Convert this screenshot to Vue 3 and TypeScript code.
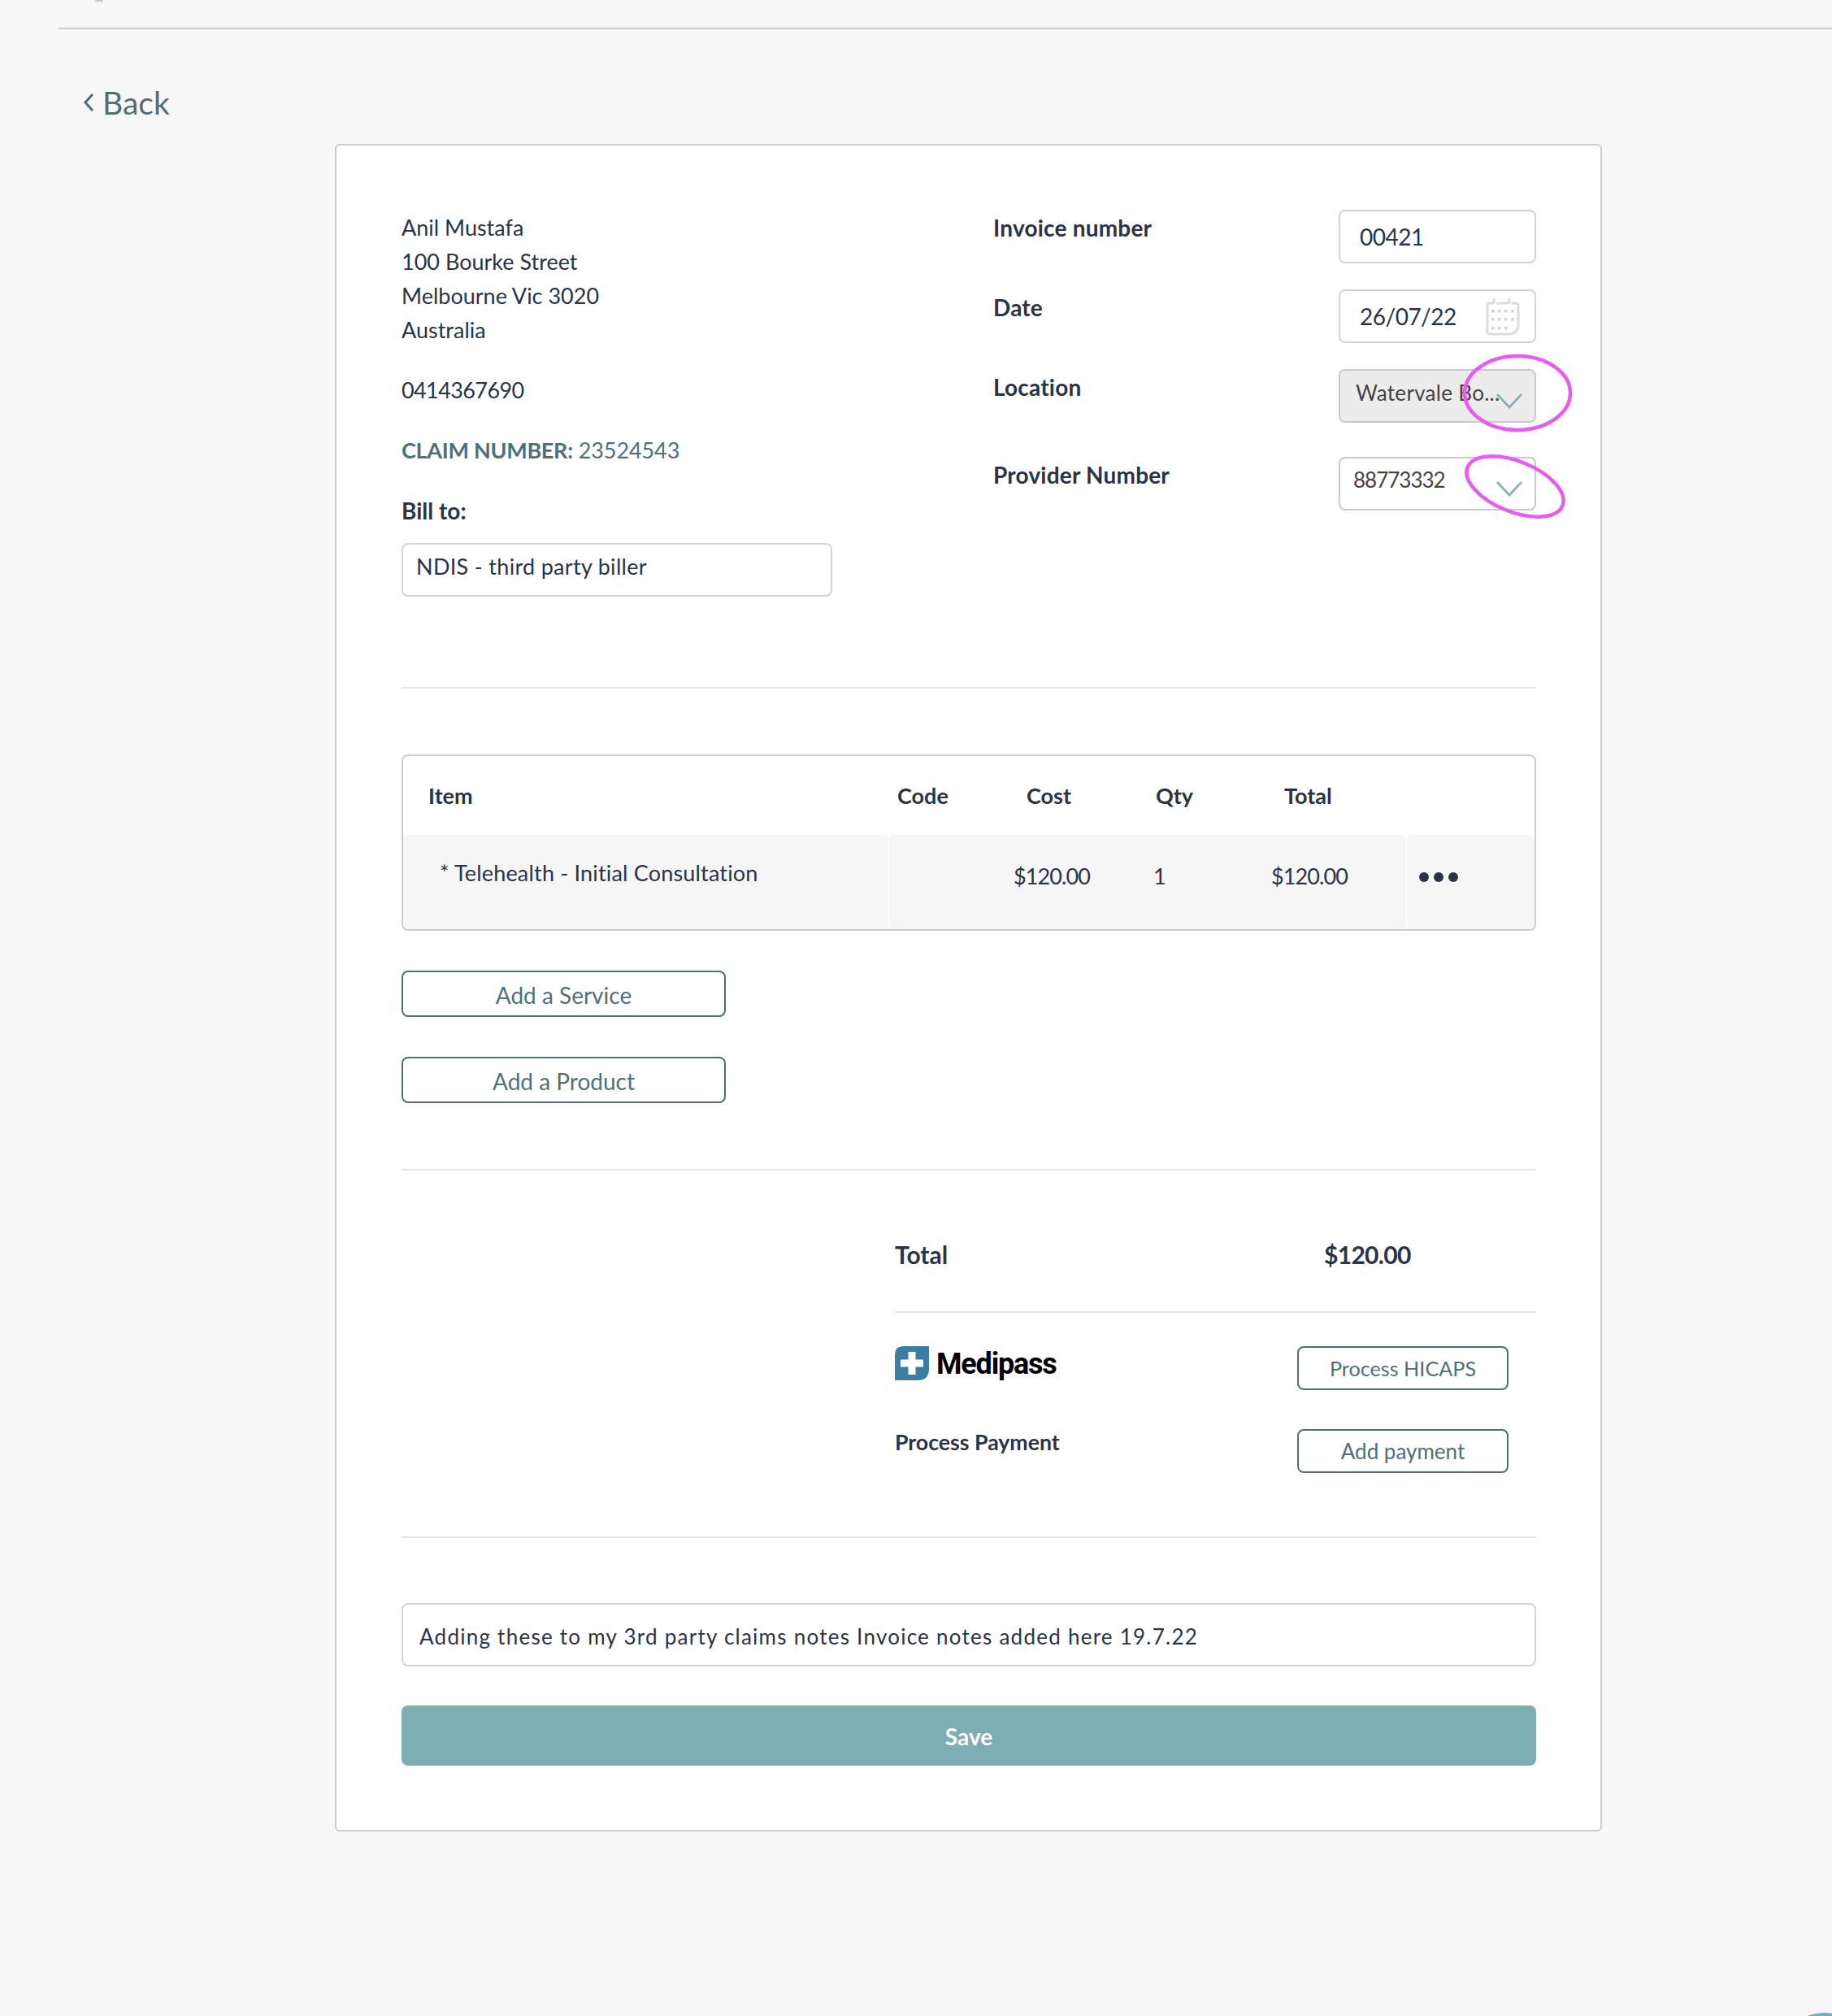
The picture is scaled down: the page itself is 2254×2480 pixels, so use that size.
<script setup lang="ts">
const address: string[] = ['Anil Mustafa', '100 Bourke Street', 'Melbourne Vic 3020', 'Australia']
const calendarDots: { x: number; y: number }[] = []
const rowsY: number[] = [15, 25, 36]
rowsY.forEach((y, r) => {
  for (let c = 0; c < (r === 2 ? 3 : 4); c++) {
    calendarDots.push({ x: 8 + c * 8, y })
  }
})
</script>

<template>
  <div class="page">
    <div class="top-mark"></div>
    <div class="top-line"></div>
    <a class="back">
      <svg class="back-icon" viewBox="0 0 14 24" width="14" height="24">
        <path d="M12 2 L3 12 L12 22" fill="none" stroke="#4f7077" stroke-width="3" />
      </svg>
      <span>Back</span>
    </a>

    <main class="card">
      <section class="head">
        <div class="left">
          <p class="para"><span v-for="line in address" :key="line" class="line">{{ line }}</span></p>
          <p class="para num">0414367690</p>
          <p class="para"><b class="claim">CLAIM NUMBER:</b> <span class="claim-no">23524543</span></p>
          <p class="para bold">Bill to:</p>
          <div class="field bill">NDIS - third party biller</div>
        </div>
        <div class="right">
          <div class="row gap-a">
            <span class="label">Invoice number</span>
            <div class="field small big-text">00421</div>
          </div>
          <div class="row gap-a">
            <span class="label">Date</span>
            <div class="field small big-text">
              26/07/22
              <svg class="cal" viewBox="0 0 44 48" width="44" height="48">
                <path d="M11 1 V5 Q11 7 9 7 H6 Q3 7 3 10 V41 Q3 45 7 45 H28 Q40 45 41 34 V10 Q41 7 38 7 H33 M30 1 V5 Q30 7 28 7 H14" fill="none" stroke="#dcdcdc" stroke-width="3" />
                <rect v-for="(d, i) in calendarDots" :key="i" :x="d.x" :y="d.y" width="3.5" height="3.5" fill="#d2d2d2" />
              </svg>
            </div>
          </div>
          <div class="row gap-b">
            <span class="label">Location</span>
            <div class="field small disabled">
              <span class="loc">Watervale Bo...</span>
              <svg class="chev loc-chev" viewBox="0 0 32 19" width="32" height="19">
                <path d="M1 1 L16 17 L31 1" fill="none" stroke="#82b4b9" stroke-width="2.8" />
              </svg>
            </div>
          </div>
          <div class="row">
            <span class="label">Provider Number</span>
            <div class="field small prov">
              <span>88773332</span>
              <svg class="chev prov-chev" viewBox="0 0 32 19" width="32" height="19">
                <path d="M1 1 L16 17 L31 1" fill="none" stroke="#82b4b9" stroke-width="2.8" />
              </svg>
            </div>
          </div>
        </div>
      </section>

      <hr class="rule first" />

      <section class="table">
        <div class="thead">
          <span>Item</span><span>Code</span><span>Cost</span><span>Qty</span><span>Total</span>
        </div>
        <div class="tbody">
          <div class="cell item">* Telehealth - Initial Consultation</div>
          <div class="cell mid"><span>$120.00</span><span class="qty">1</span><span>$120.00</span></div>
          <div class="cell actions"><i></i><i></i><i></i></div>
        </div>
      </section>

      <button class="btn wide">Add a Service</button>
      <button class="btn wide second">Add a Product</button>

      <hr class="rule second-rule" />

      <section class="summary">
        <div class="total"><span>Total</span><span class="total-value">$120.00</span></div>
        <hr class="rule" />
        <div class="pay medi">
          <div class="logo">
            <svg viewBox="0 0 42 42" width="42" height="42">
              <path d="M11 0 H42 V28 Q42 42 28 42 H0 V11 Q0 0 11 0 Z" fill="#3a7ea1" />
              <path d="M16.5 7 H25.5 V16.5 H35 V25.5 H25.5 V35 H16.5 V25.5 H7 V16.5 H16.5 Z" fill="#fff" />
            </svg>
            <span>Medipass</span>
          </div>
          <button class="btn slim hicaps">Process HICAPS</button>
        </div>
        <div class="pay proc">
          <span class="proc-label">Process Payment</span>
          <button class="btn slim">Add payment</button>
        </div>
      </section>

      <hr class="rule third-rule" />

      <div class="notes">Adding these to my 3rd party claims notes Invoice notes added here 19.7.22</div>
      <button class="save">Save</button>
    </main>

    <svg class="marks" viewBox="0 0 2254 2480" width="2254" height="2480">
      <ellipse cx="1867" cy="483.5" rx="65" ry="45.5" fill="none" stroke="#e85bf0" stroke-width="4.5" />
      <ellipse cx="1864" cy="598.5" rx="63" ry="31" transform="rotate(22 1864 598.5)" fill="none" stroke="#e85bf0" stroke-width="4.5" />
    </svg>
    <div class="chat"></div>
  </div>
</template>

<style>
html, body { margin: 0; background: #f7f7f7; }
</style>

<style scoped>
.page {
  position: relative;
  width: 2254px;
  height: 2480px;
  overflow: hidden;
  background: #f7f7f7;
  color: #2a3446;
  font-family: Lato, "Noto Sans", sans-serif;
  font-size: 27px;
  line-height: 42px;
}
.top-mark { position: absolute; left: 117px; top: 0; width: 10px; height: 2px; background: #c9c9c9; }
.top-line { height: 2px; margin: 34px 0 0 72px; background: #cccccc; }
.back {
  display: flex;
  align-items: center;
  gap: 10px;
  height: 60px;
  margin: 60px 0 0 102px;
  color: #4f7077;
  font-size: 39px;
}
.card {
  box-sizing: border-box;
  width: 1559px;
  height: 2076px;
  margin: 21px 0 0 412px;
  padding: 80px 79px 0 80px;
  background: #fff;
  border: 2px solid #cccccc;
  border-radius: 6px;
}
.head { display: grid; grid-template-columns: 728px 1fr; }
.para { margin: 0 0 32px; }
.num { letter-spacing: -0.6px; }
.line { display: block; }
.bold { font-weight: 700; font-size: 28px; margin-bottom: 19px; }
.claim { color: #4f7077; letter-spacing: -0.3px; }
.claim-no { color: #4f7077; letter-spacing: -0.1px; }
.field {
  box-sizing: border-box;
  display: flex;
  align-items: center;
  height: 66px;
  background: #fff;
  border: 2px solid #cfd4d8;
  border-radius: 8px;
}
.bill { width: 530px; padding: 0 0 8px 16px; letter-spacing: 0.3px; }
.row { display: flex; justify-content: space-between; }
.row .field { margin-top: -1px; }
.gap-a { margin-bottom: 33px; }
.gap-b { margin-bottom: 43px; }
.label { font-weight: 700; font-size: 28px; letter-spacing: 0.2px; }
.small { position: relative; width: 243px; }
.big-text { padding-left: 24px; font-size: 28px; letter-spacing: -0.5px; }
.disabled { background: #ececec; border-color: #c9c9c9; padding: 0 0 8px 19px; font-size: 26px; color: #444; letter-spacing: 0.3px; }
.prov { border-color: #c9c9c9; padding: 0 0 10px 16px; font-size: 26px; color: #444; letter-spacing: -1px; }
.cal { position: absolute; left: 178px; top: 8px; }
.chev { position: absolute; left: 192px; }
.loc-chev { top: 28px; }
.prov-chev { top: 28px; }
.rule { height: 2px; margin: 0; border: 0; background: #e6e6e6; }
.first { margin-top: 111px; }
.table {
  box-sizing: border-box;
  height: 217px;
  margin-top: 81px;
  border: 2px solid #cccccc;
  border-radius: 8px;
  overflow: hidden;
}
.thead {
  display: grid;
  grid-template-columns: 608px 159px 159px 158px 164px;
  height: 97px;
  align-items: center;
  font-weight: 700;
  font-size: 27px;
}
.thead span:first-child { padding-left: 31px; }
.tbody { display: flex; gap: 1px; height: 116px; }
.cell { background: #f6f6f6; border-radius: 6px; }
.item { width: 597px; box-sizing: border-box; padding: 26px 0 0 45px; letter-spacing: 0.18px; }
.mid { flex: 1; display: grid; grid-template-columns: 174px 143px auto; padding: 30px 0 0 153px; box-sizing: border-box; letter-spacing: -0.9px; }
.qty { margin-left: -2px; }
.actions { width: 157px; display: flex; gap: 6px; padding: 46px 0 0 15px; box-sizing: border-box; }
.actions i { width: 12px; height: 12px; border-radius: 50%; background: #2a3446; }
.btn {
  display: block;
  box-sizing: border-box;
  background: #fff;
  border: 2px solid #4f7077;
  border-radius: 8px;
  color: #4f7077;
  font: inherit;
  padding: 0;
}
.wide { width: 399px; height: 57px; margin-top: 49px; padding-top: 2px; font-size: 28px; }
.second-rule { margin-top: 81px; }
.summary { margin: 82px 0 0 607px; }
.total { display: grid; grid-template-columns: 528px auto; font-size: 30px; font-weight: 700; margin-bottom: 49px; }
.total-value { letter-spacing: -0.7px; }
.pay { display: flex; justify-content: space-between; width: 755px; }
.medi { margin-top: 41px; height: 102px; }
.logo { display: flex; gap: 9px; height: 42px; align-items: center; color: #000; font-weight: 700; font-size: 36px; letter-spacing: -1.2px; font-family: Roboto, sans-serif; }
.logo span { padding-top: 2px; }
.proc { height: 54px; }
.proc-label { font-weight: 700; font-size: 26.7px; margin-top: -5px; }
.slim { width: 260px; height: 54px; font-size: 26px; }
.hicaps { font-size: 25.2px; }
.third-rule { margin-top: 78px; }
.notes {
  box-sizing: border-box;
  display: flex;
  align-items: center;
  height: 78px;
  margin-top: 80px;
  padding: 4px 0 0 20px;
  border: 2px solid #cfd4d8;
  border-radius: 8px;
  font-size: 26px;
  letter-spacing: 1.25px;
}
.save {
  display: block;
  width: 100%;
  height: 74px;
  margin-top: 48px;
  padding: 2px 0 0;
  background: #7daeb4;
  border: 0;
  border-radius: 8px;
  color: #fff;
  font: inherit;
  font-weight: 700;
  font-size: 28px;
}
.marks { position: absolute; left: 0; top: 0; pointer-events: none; }
.chat { position: absolute; left: 2183px; top: 2476px; width: 124px; height: 124px; border-radius: 50%; background: #7daeb4; }
</style>
